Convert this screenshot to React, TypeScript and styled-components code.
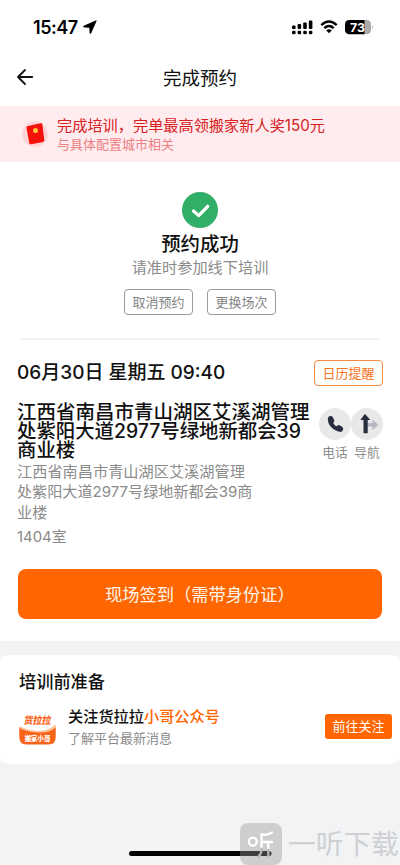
import React from "react";
import styled, { createGlobalStyle } from "styled-components";

const Global = createGlobalStyle`
  * { box-sizing: border-box; }
  body {
    margin: 0;
    background: #f2f3f5;
    font-family: Inter, "Noto Sans CJK SC", sans-serif;
    color: #111;
  }
  button { font-family: inherit; padding: 0; margin: 0; cursor: pointer; }
`;

const Page = styled.div`
  width: 400px;
  height: 865px;
  display: flex;
  flex-direction: column;
  background: #f2f3f5;
  overflow: hidden;
  position: relative;
`;

const Line = styled.div<{ $size: number; $height: number; $color?: string; $weight?: number }>`
  font-size: ${(p) => p.$size}px;
  line-height: ${(p) => p.$height}px;
  height: ${(p) => p.$height}px;
  color: ${(p) => p.$color ?? "#111"};
  font-weight: ${(p) => p.$weight ?? 400};
  white-space: nowrap;
`;

const StatusBar = styled.header`
  height: 54px;
  flex: none;
  display: flex;
  align-items: center;
  justify-content: space-between;
  background: #fff;
  padding: 0 26px 0 33px;
`;

const Clock = styled.div`
  display: flex;
  align-items: center;
  gap: 5px;
  font-size: 18px;
  font-weight: 600;
  letter-spacing: -0.45px;
  color: #000;
`;

const StatusIcons = styled.div`
  display: flex;
  align-items: center;
  svg { display: block; }
`;

const WifiIcon = styled.svg`
  margin: 0 -7px 0 7px;
`;

const NavBar = styled.nav`
  height: 52px;
  flex: none;
  display: grid;
  grid-template-columns: 60px 1fr 60px;
  align-items: center;
  background: #fff;
  padding-bottom: 5px;
  text-align: center;
`;

const BackButton = styled.button`
  border: 0;
  background: none;
  display: flex;
  padding: 0 0 2px 16px;
`;

const Notice = styled.section`
  height: 56px;
  flex: none;
  background: #ffecee;
  display: flex;
  align-items: flex-start;
  gap: 9px;
  padding: 9px 0 0 22px;
  svg { margin-top: 6px; display: block; }
`;

const Main = styled.main`
  height: 479px;
  flex: none;
  background: #fff;
  padding: 30px 18px 0;
  display: flex;
  flex-direction: column;
`;

const Result = styled.section`
  display: flex;
  flex-direction: column;
  align-items: center;
  height: 146px;
  flex: none;
  svg { display: block; }
`;

const Actions = styled.div`
  display: flex;
  gap: 14px;
  margin-top: 14px;
`;

const OutlineButton = styled.button<{ $tone: string; $line: string }>`
  width: 69px;
  height: 26px;
  flex: none;
  font-size: 13px;
  line-height: 23px;
  color: ${(p) => p.$tone};
  border: 1px solid ${(p) => p.$line};
  border-radius: 4px;
  background: #fff;
`;

const Divider = styled.hr`
  width: 358px;
  height: 2px;
  border: 0;
  background: #f3f3f3;
  margin: 0 auto;
  flex: none;
`;

const Schedule = styled.div`
  display: flex;
  align-items: center;
  justify-content: space-between;
  height: 26px;
  margin: 20px -1px 0 -1px;
  flex: none;
`;

const Venue = styled.div`
  display: flex;
  justify-content: space-between;
  height: 149px;
  flex: none;
  margin: 17px -1px 0 -1px;
`;

const Address = styled.div`
  width: 296px;
`;

const TitleLines = styled.div`
  height: 58px;
`;

const Contacts = styled.div`
  display: flex;
  padding-top: 5px;
`;

const Contact = styled.div`
  width: 32px;
  display: flex;
  flex-direction: column;
  align-items: center;
  svg { display: block; }
`;

const SignIn = styled.button`
  width: 364px;
  height: 50px;
  flex: none;
  margin-top: 17px;
  border: 0;
  border-radius: 8px;
  background: #ff6600;
  color: #fff4e8;
  font-size: 17.25px;
  line-height: 49px;
`;

const Prep = styled.section`
  margin-top: 14px;
  height: 109px;
  flex: none;
  background: #fff;
  border-radius: 8px;
  padding: 14px 8px 0 19px;
`;

const PrepRow = styled.div`
  display: flex;
  align-items: flex-start;
  margin-top: 10px;
  > svg { display: block; margin-top: 5px; }
`;

const PrepText = styled.div`
  flex: 1;
  padding-left: 12px;
`;

const Accent = styled.span`
  color: #ff6600;
`;

const FollowButton = styled.button`
  width: 67px;
  height: 25px;
  margin-top: 9px;
  border: 0;
  border-radius: 3px;
  background: #ff6600;
  color: #fff;
  font-size: 13px;
  line-height: 23px;
`;

const HomeIndicator = styled.div`
  position: absolute;
  left: 129px;
  top: 851px;
  width: 142px;
  height: 5px;
  border-radius: 3px;
  background: #000;
`;

const Watermark = styled.div`
  position: absolute;
  left: 240px;
  top: 823px;
  display: flex;
  align-items: center;
  gap: 6px;
  height: 42px;
  font-size: 27.7px;
  font-weight: 400;
  line-height: 40px;
  color: #cfd0d2;
  white-space: nowrap;
  svg { flex: none; display: block; }
`;

const cellBars = [
  { x: 0, y: 5.5, h: 3.6 },
  { x: 5.6, y: 4, h: 5.1 },
  { x: 11.2, y: 2.4, h: 6.7 },
  { x: 16.8, y: 0.6, h: 8.5 },
];

function StatusArea() {
  return (
    <StatusBar>
      <Clock>
        15:47
        <svg width="14" height="14" viewBox="0 0 14 14">
          <path d="M13.2.8 7.8 13.1Q7.2 14 7 12.9L6.8 7.3 1 7Q0 6.8 1 6.1Z" fill="#000" stroke="#000" strokeWidth=".9" strokeLinejoin="round" />
        </svg>
      </Clock>
      <StatusIcons>
        <svg width="21" height="15" viewBox="0 0 21 15">
          {cellBars.map((b) => (
            <React.Fragment key={b.x}>
              <rect x={b.x} y={b.y} width="3.6" height={b.h} rx="1.1" />
              <rect x={b.x} y="10.7" width="3.6" height="3.5" rx="1.2" />
            </React.Fragment>
          ))}
        </svg>
        <WifiIcon width="18" height="14" viewBox="0 0 18 14">
          <path d="M1.3 5.1Q9-1.9 16.7 5.1M4.3 8.2Q9 4 13.7 8.2" fill="none" stroke="#000" strokeWidth="2.4" />
          <path d="M6.1 10.3Q9 8 11.9 10.3L9 13.3Z" />
        </WifiIcon>
        <svg width="43" height="16" viewBox="0 0 43 16">
          <defs>
            <clipPath id="battery-shape"><rect x="14" y="1" width="26" height="14.4" rx="4.4" /></clipPath>
          </defs>
          <g clipPath="url(#battery-shape)">
            <rect x="14" y="1" width="26" height="14.4" fill="#ababab" />
            <rect x="14" y="1" width="19.5" height="14.4" fill="#000" />
          </g>
          <path d="M41 6q2 2 0 4Z" fill="#ababab" />
          <text x="26.5" y="12.6" fill="#fff" fontFamily="Inter, sans-serif" fontWeight="700" fontSize="12.4" textAnchor="middle">73</text>
        </svg>
      </StatusIcons>
    </StatusBar>
  );
}

function EnvelopeIcon() {
  return (
    <svg width="26" height="26" viewBox="0 0 26 26">
      <circle cx="13" cy="13" r="12.7" fill="#ffd3d5" />
      <path d="M5.2 5.3 18.5 2.3Q20.1 2 20.4 3.6L22.3 19.2Q22.4 20.5 21 20.9L9 23.2Q7.6 23.5 7.2 22L4.5 6.7Q4.4 5.5 5.2 5.3Z" fill="#f5120d" />
      <circle cx="13.5" cy="9.6" r="2.5" fill="#ffc33c" />
    </svg>
  );
}

function PhoneIcon() {
  return (
    <svg width="32" height="32" viewBox="0 0 32 32">
      <circle cx="16" cy="16" r="16" fill="#e8e8e9" />
      <path d="M11.2 8.1Q9.2 8.4 8.8 10.6C8.5 17.3 15 23.8 22 23.9Q24 23.1 24.2 21Q24.4 19.5 23 18.7L20.6 17.2Q19.5 16.7 18.5 17.5L17.4 18.3C16 17.5 15 16.4 14.3 14.9L15 13.8Q15.6 12.8 15.1 11.8L13.6 9Q12.8 7.7 11.2 8.1Z" fill="#282d3d" />
    </svg>
  );
}

function RouteIcon() {
  return (
    <svg width="32" height="32" viewBox="0 0 32 32">
      <circle cx="16" cy="16" r="16" fill="#e8e8e9" />
      <path d="M15 15.2H21.5V12.2Q21.5 11.7 22 12.1L26.8 16.6Q27.2 17 26.8 17.4L22 21.6Q21.5 22 21.5 21.4V18.6H15Z" fill="#b5b6c1" />
      <path d="M14.2 6.2 19 11.4Q19.4 12 18.7 12H16.7V25.3H12.5V12H10Q9.3 12 9.7 11.4L13.6 6.3Q13.9 5.9 14.2 6.2Z" fill="#282d3d" />
    </svg>
  );
}

function BrandIcon() {
  return (
    <svg width="37" height="37" viewBox="0 0 37 37">
      <path d="M.3 17Q18.5 24 36.7 17V27Q36.7 34.5 29.5 34.5H7.5Q.3 34.5 .3 27Z" fill="#fa641a" />
      <path d="M.3 16.4Q18 21 36.7 14.8V17.4Q29 23.6 17 22.4Q6 21.5 .3 18Z" fill="#ffc39d" />
      <path d="M.3 15.6Q18 20.8 36.7 14Q29 21.8 17 20.8Q6 20 .3 15.6Z" fill="#fff" />
      <text x="5" y="14" transform="skewX(-10) translate(2 0)" fontFamily='"Noto Sans CJK SC", sans-serif' fontSize="10" fontWeight="900" fill="#f76520" textLength="27" lengthAdjust="spacingAndGlyphs">货拉拉</text>
      <text x="18.5" y="31.4" textAnchor="middle" fontFamily='"Noto Sans CJK SC", sans-serif' fontSize="6.4" fontWeight="900" fill="#fff">搬家小哥</text>
    </svg>
  );
}

export default function App() {
  return (
    <Page>
      <Global />
      <StatusArea />
      <NavBar>
        <BackButton aria-label="返回">
          <svg width="18" height="18" viewBox="0 0 18 18" fill="none" stroke="#111" strokeWidth="1.8" strokeLinejoin="round" strokeLinecap="round">
            <path d="M9 2 2 9l7 7M2 9h14.2" />
          </svg>
        </BackButton>
        <Line $size={18.5} $height={28}>完成预约</Line>
      </NavBar>
      <Notice>
        <EnvelopeIcon />
        <div>
          <Line $size={15.2} $height={21} $color="#d7201f">完成培训，完单最高领搬家新人奖150元</Line>
          <Line $size={13} $height={17} $color="#ec8084">与具体配置城市相关</Line>
        </div>
      </Notice>
      <Main>
        <Result>
          <svg width="36" height="36" viewBox="0 0 36 36">
            <circle cx="18" cy="18" r="18" fill="#31ae68" />
            <path d="m11.5 19 5.2 4.6 9-9.3" fill="none" stroke="#fff" strokeWidth="3.2" strokeLinecap="round" strokeLinejoin="round" />
          </svg>
          <Line $size={19.4} $height={32} $weight={500}>预约成功</Line>
          <Line $size={15.2} $height={15} $color="#8b8b8b">请准时参加线下培训</Line>
          <Actions>
            <OutlineButton $tone="#858585" $line="#9c9c9c">取消预约</OutlineButton>
            <OutlineButton $tone="#858585" $line="#9c9c9c">更换场次</OutlineButton>
          </Actions>
        </Result>
        <Divider />
        <Schedule>
          <Line $size={19} $height={28} $weight={500}>06月30日 星期五 09:40</Line>
          <OutlineButton $tone="#f4751f" $line="#f48a3e">日历提醒</OutlineButton>
        </Schedule>
        <Venue>
          <Address>
            <TitleLines>
              <Line $size={19.5} $height={19} $weight={500}>江西省南昌市青山湖区艾溪湖管理</Line>
              <Line $size={19.4} $height={19} $weight={500}>处紫阳大道2977号绿地新都会39</Line>
              <Line $size={19.4} $height={19} $weight={500}>商业楼</Line>
            </TitleLines>
            <Line $size={15.2} $height={21} $color="#8b8b8b">江西省南昌市青山湖区艾溪湖管理</Line>
            <Line $size={15.1} $height={20} $color="#8b8b8b">处紫阳大道2977号绿地新都会39商</Line>
            <Line $size={15.2} $height={21} $color="#8b8b8b">业楼</Line>
            <Line $size={14.9} $height={29} $color="#8b8b8b">1404室</Line>
          </Address>
          <Contacts>
            <Contact>
              <PhoneIcon />
              <Line $size={12.7} $height={25} $color="#8b8b8b">电话</Line>
            </Contact>
            <Contact>
              <RouteIcon />
              <Line $size={12.7} $height={25} $color="#8b8b8b">导航</Line>
            </Contact>
          </Contacts>
        </Venue>
        <SignIn>现场签到（需带身份证）</SignIn>
      </Main>
      <Prep>
        <Line $size={17.2} $height={26} $weight={500}>培训前准备</Line>
        <PrepRow>
          <BrandIcon />
          <PrepText>
            <Line $size={15.2} $height={24} $weight={500}>关注货拉拉<Accent>小哥公众号</Accent></Line>
            <Line $size={13} $height={19} $color="#8b8b8b">了解平台最新消息</Line>
          </PrepText>
          <FollowButton>前往关注</FollowButton>
        </PrepRow>
      </Prep>
      <HomeIndicator />
      <Watermark>
        <svg width="42" height="42" viewBox="0 0 42 42">
          <rect width="42" height="42" rx="8" fill="#ceced0" />
          <path d="M0 28H29q2.5 0 2.5 2.5T29 33H0Z" fill="#3d3d3e" />
          <g fill="none" stroke="#fff" strokeWidth="2.3" strokeLinecap="round">
            <circle cx="12.8" cy="18.6" r="4" />
            <path d="M32 9.5Q28 12.5 21.5 11.5V26M22 19H32M28.3 19V27" />
            <path d="M21.5 26Q21.5 31 18.5 33.5M28.3 27V33" stroke="#b5b5b6" />
          </g>
        </svg>
        一听下载
      </Watermark>
    </Page>
  );
}
